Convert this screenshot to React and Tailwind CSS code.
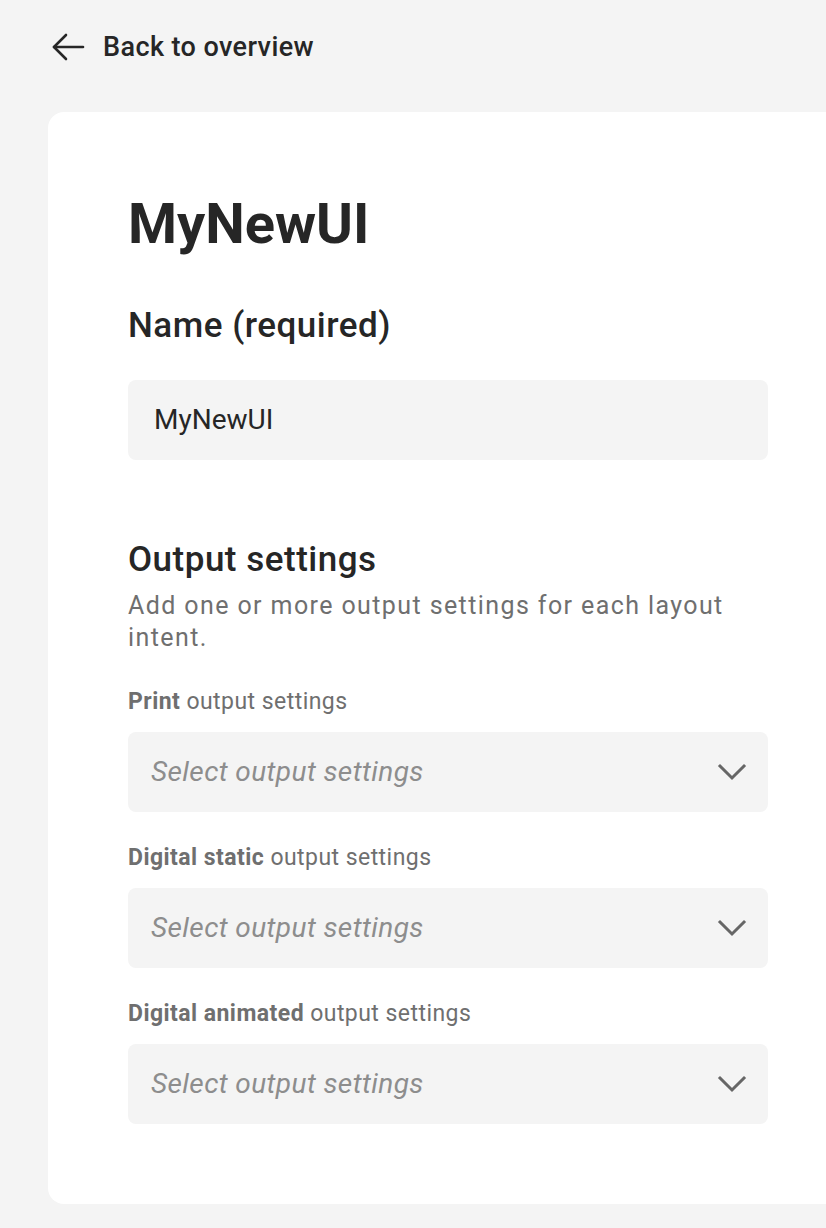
const font = { fontFamily: "Roboto, 'Liberation Sans', sans-serif" };

function Chevron() {
  return (
    <svg width="30" height="18" viewBox="0 0 30 18" fill="none" stroke="#666666" strokeWidth="3" strokeLinecap="square">
      <path d="M3 3l12 12L27 3" />
    </svg>
  );
}

function OutputSelect({ strong, rest }) {
  return (
    <div className="mt-[32px] first:mt-0">
      <div className="mb-4 text-[23px] leading-[28px] tracking-[0.45px] text-[#6f6f6f]">
        <span className="font-bold">{strong}</span> {rest}
      </div>
      <button className="flex h-[80px] w-full items-center justify-between rounded-lg bg-[#f4f4f4] pl-[23px] pr-[21px] text-left">
        <span className="text-[28px] italic tracking-[0.4px] text-[#8d8d8d]">Select output settings</span>
        <Chevron />
      </button>
    </div>
  );
}

export default function App() {
  return (
    <div className="min-h-[1228px] w-full overflow-hidden bg-[#f4f4f4]" style={font}>
      <div className="flex items-center gap-[17px] px-[50px] pt-[29px] text-[#262626]">
        <svg width="36" height="36" viewBox="0 0 36 36" fill="none" stroke="currentColor" strokeWidth="2.6" strokeLinecap="round" strokeLinejoin="round">
          <path d="M33 18H4" />
          <path d="M16 6L4 18l12 12" />
        </svg>
        <span className="text-[27px] font-medium leading-[36px] tracking-[0.4px]">Back to overview</span>
      </div>

      <div className="ml-[48px] mt-[47px] w-[800px] rounded-2xl bg-white px-[80px] pb-[80px] pt-[80px]">
        <h1 className="text-[56px] font-bold leading-[64px] text-[#262626]">MyNewUI</h1>

        <h2 className="mt-[48px] text-[35px] font-medium leading-[44px] tracking-[0.5px] text-[#262626]">
          Name (required)
        </h2>
        <div className="mt-[32px] flex h-[80px] items-center rounded-lg bg-[#f4f4f4] pl-[26px] pr-6 text-[28px] text-[#262626]">
          MyNewUI
        </div>

        <h2 className="mt-[78px] text-[35px] font-medium leading-[44px] tracking-[0.5px] text-[#262626]">
          Output settings
        </h2>
        <p className="mt-[8px] text-[25px] leading-[32px] tracking-[1.4px] text-[#6f6f6f]">
          Add one or more output settings for each layout intent.
        </p>

        <div className="mt-[34px]">
          <OutputSelect strong="Print" rest="output settings" />
          <OutputSelect strong="Digital static" rest="output settings" />
          <OutputSelect strong="Digital animated" rest="output settings" />
        </div>
      </div>
    </div>
  );
}
